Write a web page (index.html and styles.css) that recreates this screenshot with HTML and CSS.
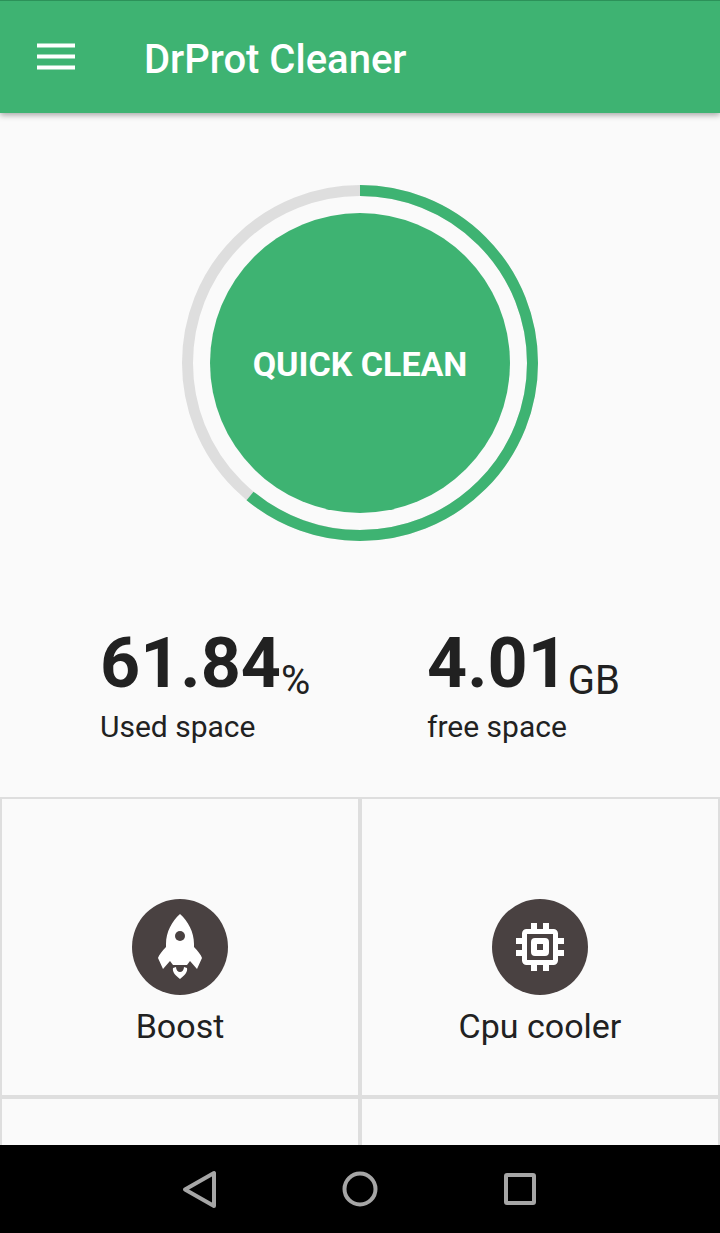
FILE: index.html
```
<!DOCTYPE html>
<html lang="en">
<head>
<meta charset="UTF-8">
<meta name="viewport" content="width=device-width, initial-scale=1">
<title>DrProt Cleaner</title>
<link rel="stylesheet" href="styles.css">
</head>
<body>

<header class="toolbar">
  <button class="menu-button" type="button" aria-label="Open menu">
    <svg width="38" height="28" viewBox="0 0 38 28" fill="#fff">
      <path d="M0 0.5h38v4H0zM0 11.5h38v4H0zM0 22.5h38v4H0z"/>
    </svg>
  </button>
  <h1 class="title">DrProt Cleaner</h1>
</header>

<main class="content">
  <!-- Storage ring with the clean button inside -->
  <div class="gauge">
    <svg class="ring" viewBox="0 0 356 356" fill="none" stroke-width="11">
      <circle cx="178" cy="178" r="172.5" stroke="#dedede"/>
      <circle cx="178" cy="178" r="172.5" stroke="#3eb372" pathLength="100" stroke-dasharray="61 39" transform="rotate(-90 178 178)"/>
    </svg>
    <button class="clean-button" type="button">QUICK CLEAN</button>
  </div>

  <section class="stats">
    <div class="stat">
      <div class="value">61.84<span class="unit">%</span></div>
      <div class="caption">Used space</div>
    </div>
    <div class="stat">
      <div class="value">4.01<span class="unit">GB</span></div>
      <div class="caption">free space</div>
    </div>
  </section>

  <section class="tools">
    <button class="tool" type="button">
      <svg class="tool-icon" viewBox="0 0 96 96">
        <circle cx="48" cy="48" r="48" fill="#494141"/>
        <path fill="#fff" d="M48 15C40 22 34 33 34 45V48C30 52 27 56 26 59L31 70L38 62L41 66H55L58 62L65 70L70 59C69 56 66 52 62 48V45C62 33 56 22 48 15Z"/>
        <circle cx="48" cy="37" r="5" fill="#494141"/>
        <path fill="#fff" d="M41 69L44 68C44 71 46 73 48 73C50 73 52 71 52 68L55 69C56 73 52 77 48 80C44 77 40 73 41 69Z"/>
      </svg>
      <span class="tool-name">Boost</span>
    </button>
    <button class="tool" type="button">
      <svg class="tool-icon" viewBox="0 0 96 96">
        <circle cx="48" cy="48" r="48" fill="#494141"/>
        <path fill="#fff" d="M39 24h6v7h-6zM51 24h6v7h-6zM39 65h6v7h-6zM51 65h6v7h-6zM24 39h7v6h-7zM24 51h7v6h-7zM65 39h7v6h-7zM65 51h7v6h-7z"/>
        <rect x="32.5" y="32.5" width="31" height="31" rx="2" fill="none" stroke="#fff" stroke-width="5"/>
        <rect x="42" y="42" width="12" height="12" rx="1" fill="none" stroke="#fff" stroke-width="6"/>
      </svg>
      <span class="tool-name">Cpu cooler</span>
    </button>
    <div class="tool"></div>
    <div class="tool"></div>
  </section>
</main>

<nav class="system-bar">
  <button class="system-button" type="button" aria-label="Back">
    <svg width="40" height="40" viewBox="0 0 40 40"><path d="M5 20.5L34 4V37Z"/></svg>
  </button>
  <button class="system-button" type="button" aria-label="Home">
    <svg width="40" height="40" viewBox="0 0 40 40"><circle cx="20" cy="20" r="15.5"/></svg>
  </button>
  <button class="system-button" type="button" aria-label="Recent apps">
    <svg width="40" height="40" viewBox="0 0 40 40"><rect x="6" y="6" width="28" height="28" rx="1"/></svg>
  </button>
</nav>

</body>
</html>
```

FILE: styles.css
```
* { box-sizing: border-box; }
body {
  margin: 0;
  height: 100vh;
  display: flex;
  flex-direction: column;
  overflow: hidden;
  background: #fafafa;
  color: #212121;
  font-family: Roboto, sans-serif;
}
button {
  border: none;
  padding: 0;
  background: none;
  color: inherit;
  font-family: inherit;
  cursor: pointer;
}
svg { display: block; }

.toolbar {
  display: flex;
  align-items: center;
  gap: 69px;
  padding: 41px 37px 35px;
  border-top: 1px solid #2c9159;
  background: #3eb372;
  color: #fff;
  box-shadow: 0 2px 6px rgba(0,0,0,0.35);
  z-index: 1;
}
.menu-button { padding-bottom: 6px; }
.title {
  margin: 0;
  font-size: 40px;
  font-weight: 500;
  line-height: 36px;
}
.toolbar, .system-bar { flex: none; }

.content {
  flex: 1;
  min-height: 0;
  overflow: hidden;
}
.gauge {
  display: grid;
  place-items: center;
  padding-top: 72px;
}
.ring, .clean-button { grid-area: 1 / 1; }
.ring { width: 356px; }
.clean-button {
  width: 300px;
  height: 300px;
  padding-top: 2px;
  border-radius: 50%;
  background: #3eb372;
  color: #fff;
  font-size: 34px;
  font-weight: bold;
}

.stats {
  display: flex;
  justify-content: space-between;
  padding: 82px 100px 50px;
}
.value {
  display: flex;
  align-items: flex-end;
  font-size: 70px;
  font-weight: bold;
  line-height: 80px;
}
.unit {
  font-size: 40px;
  font-weight: normal;
  line-height: 44px;
}
.caption {
  margin-top: 4px;
  font-size: 30px;
  line-height: 40px;
}

.tools {
  display: grid;
  grid-template-columns: 1fr 1fr;
}
.tool {
  display: flex;
  flex-direction: column;
  align-items: center;
  gap: 11px;
  min-height: 300px;
  padding-top: 100px;
  border: 2px solid #dedede;
}
.tool-icon { width: 96px; height: 96px; }
.tool-name { font-size: 34px; line-height: 40px; }

.system-bar {
  display: flex;
  justify-content: center;
  gap: 120px;
  padding: 24px;
  background: #000;
}
.system-button svg {
  fill: none;
  stroke: #a6a6a6;
  stroke-width: 4;
  stroke-linejoin: round;
}
```
